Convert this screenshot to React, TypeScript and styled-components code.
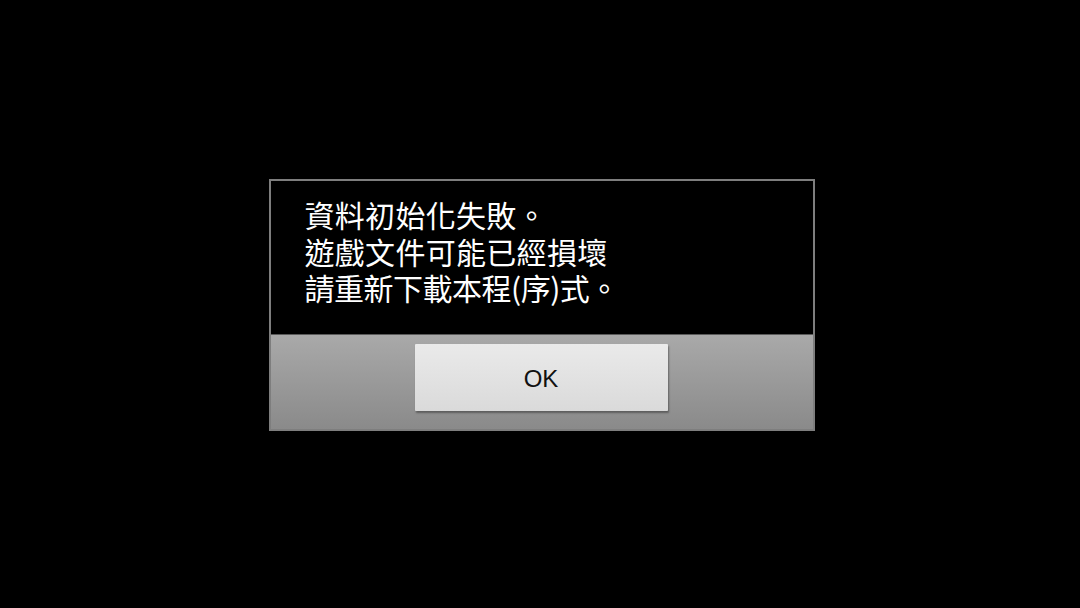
import React from "react";
import styled, { createGlobalStyle } from "styled-components";

const Global = createGlobalStyle`
  html, body { margin: 0; padding: 0; background: #000; }
  body { width: 1080px; height: 608px; overflow: hidden; }
  #root { width: 1080px; height: 608px; }
`;

const Screen = styled.div`
  width: 1080px;
  height: 608px;
  background: #000;
  display: flex;
  align-items: flex-start;
  justify-content: center;
  padding-top: 179px;
  box-sizing: border-box;
`;

const Dialog = styled.div`
  width: 546px;
  margin-left: 3px;
  border: 2px solid #7e7e7e;
  box-sizing: border-box;
  display: flex;
  flex-direction: column;
  background: #000;
`;

const Message = styled.div`
  height: 154px;
  box-sizing: border-box;
  padding: 15px 0 0 34px;
  color: #fff;
  font-family: "Noto Sans CJK TC", "Noto Sans", sans-serif;
  font-size: 30px;
  line-height: 36.5px;
  border-bottom: 1px solid #5a5a5a;
`;

const Line = styled.div<{ $spacing: number }>`
  white-space: nowrap;
  height: 36.5px;
  letter-spacing: ${(p) => p.$spacing}px;
`;

const ButtonBar = styled.div`
  height: 94px;
  background: linear-gradient(#a9a9a9, #8a8a8a);
  display: flex;
  justify-content: flex-start;
  padding: 9px 0 0 144px;
  box-sizing: border-box;
`;

const OkButton = styled.button`
  width: 253px;
  height: 67px;
  border: none;
  border-radius: 1px;
  background: linear-gradient(#eaeaea, #dadada);
  box-shadow: 1px 2px 2px rgba(0, 0, 0, 0.35);
  font-family: "Liberation Sans", Arial, sans-serif;
  font-size: 24px;
  color: #111;
  padding: 2px 0 0 0;
  cursor: pointer;
`;

export default function App() {
  return (
    <>
      <Global />
      <Screen>
        <Dialog>
          <Message>
            <Line $spacing={0.3}>資料初始化失敗。</Line>
            <Line $spacing={0.3}>遊戲文件可能已經損壞</Line>
            <Line $spacing={-0.5}>請重新下載本程(序)式。</Line>
          </Message>
          <ButtonBar>
            <OkButton>OK</OkButton>
          </ButtonBar>
        </Dialog>
      </Screen>
    </>
  );
}
